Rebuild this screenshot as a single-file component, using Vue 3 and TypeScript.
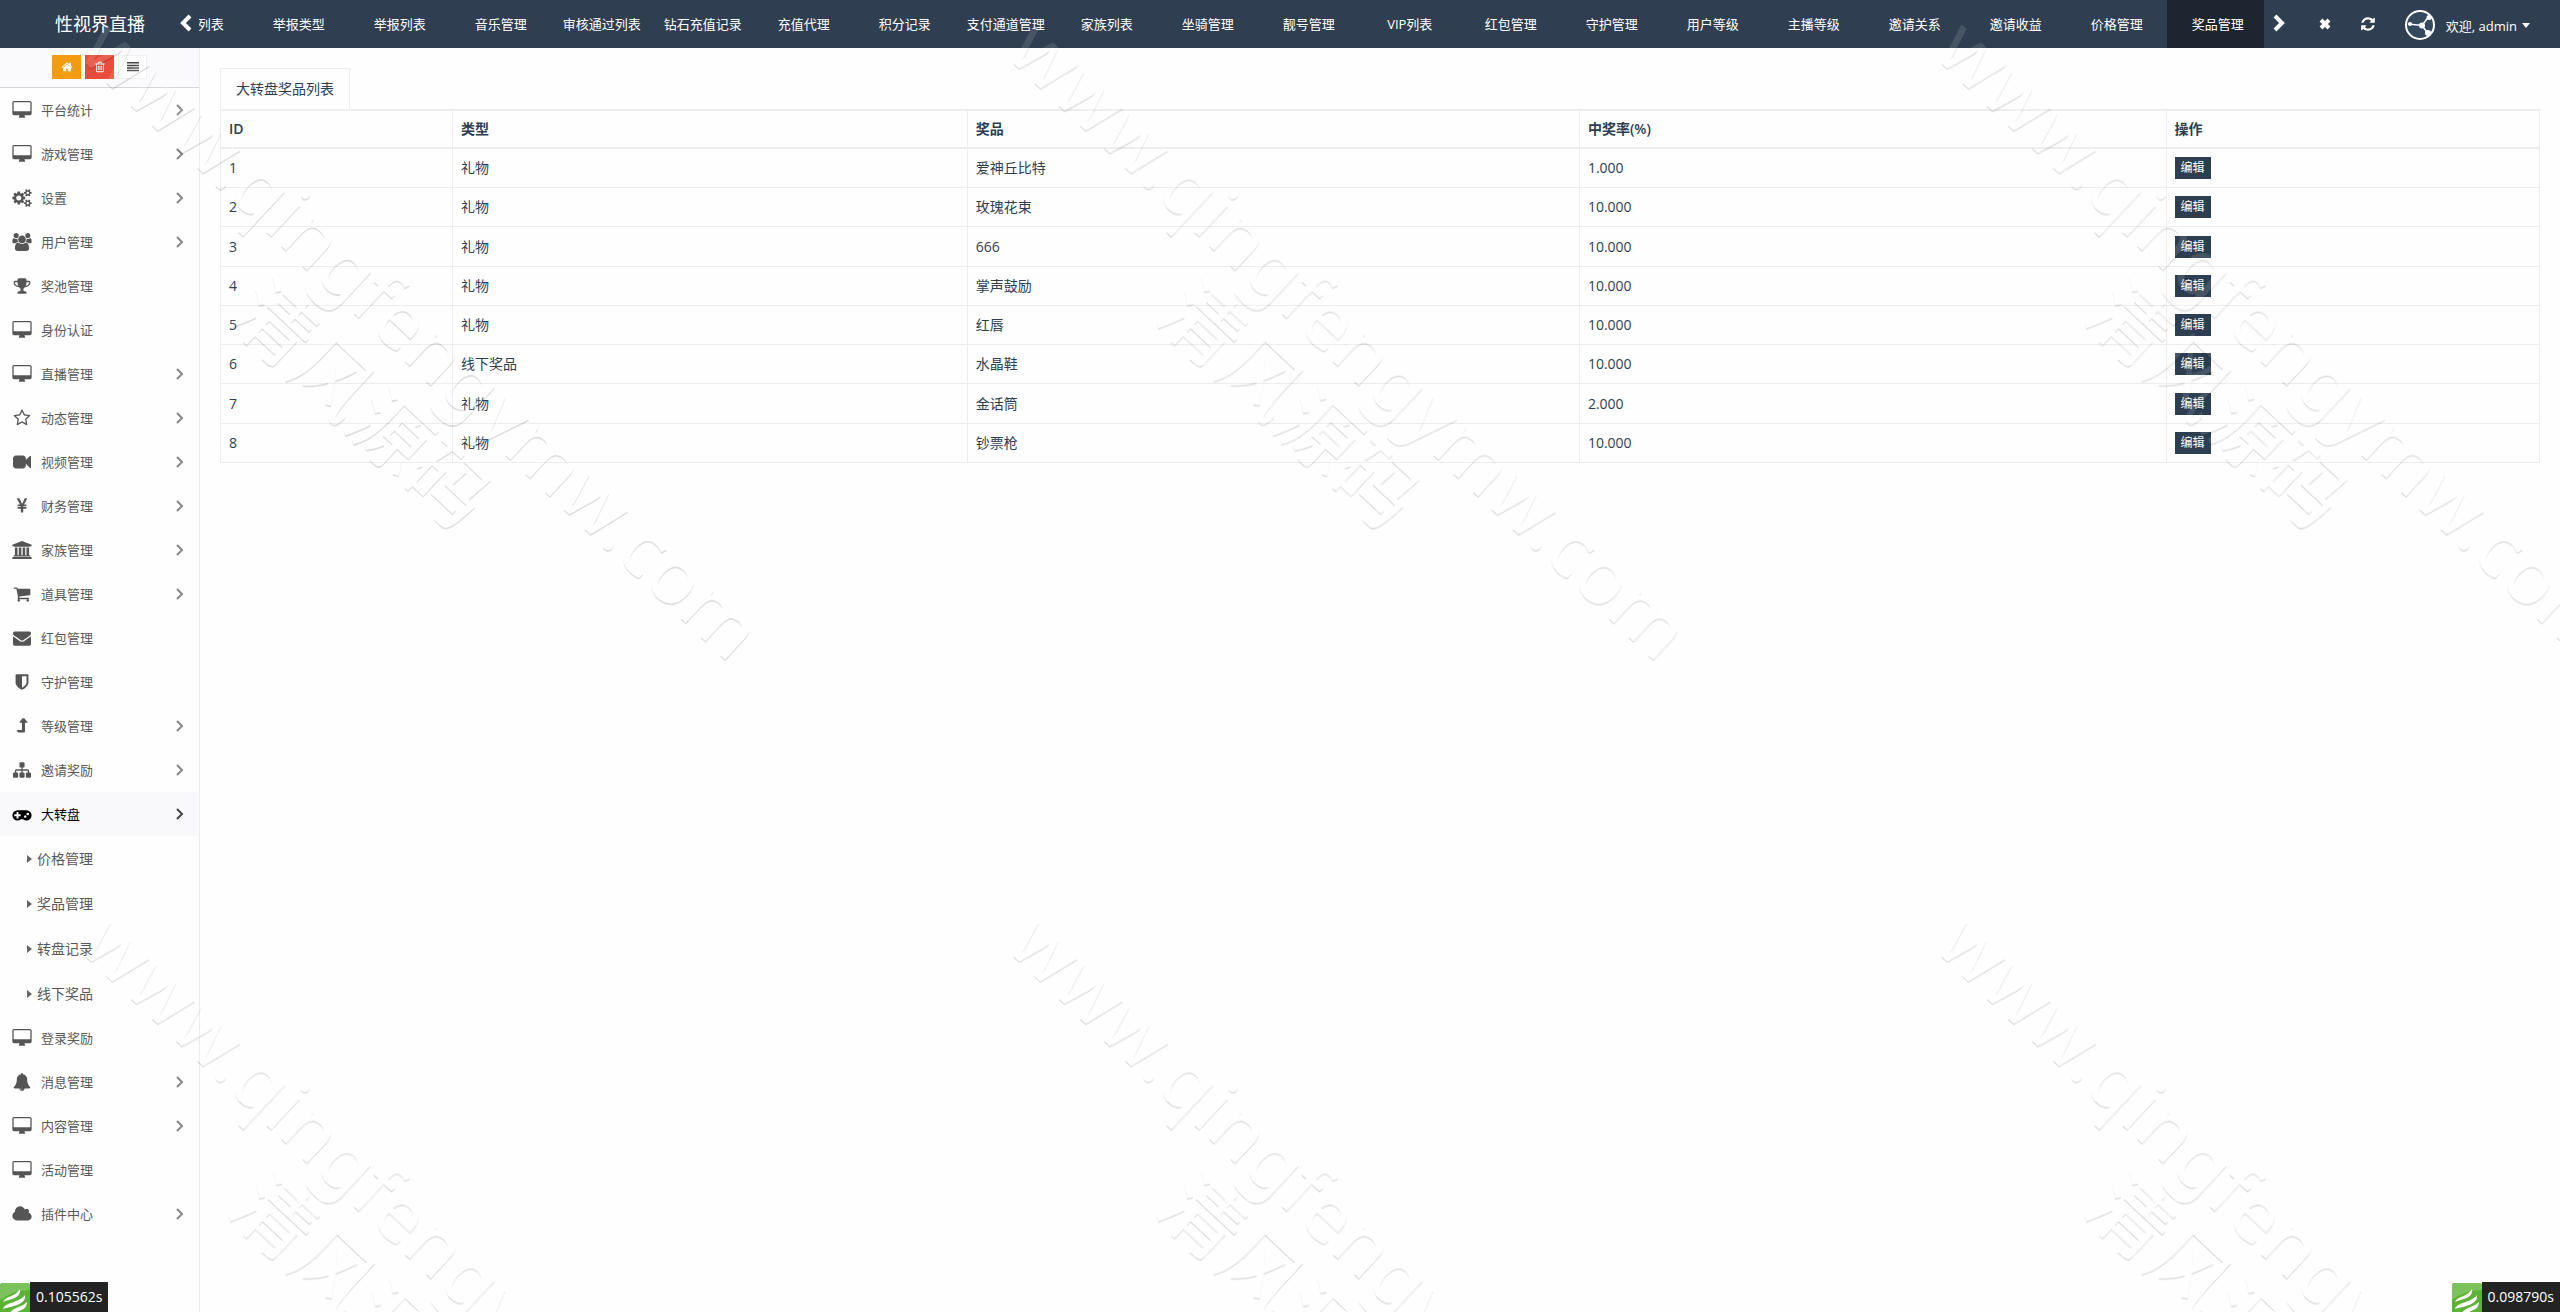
<script setup lang="ts">
import { ref } from 'vue'

interface Icon {
  w: number
  d: string
}
interface MenuItem {
  label: string
  icon: string
  expandable: boolean
  children?: string[]
}
interface Prize {
  id: number
  type: string
  name: string
  rate: string
}

const icons: Record<string, Icon> = {
  desktop: { w: 1920, d: 'M1792 992v-832q0-13-9.500-22.500t-22.500-9.500h-1600q-13 0-22.500 9.500t-9.500 22.500v832q0 13 9.500 22.500t22.500 9.500h1600q13 0 22.500-9.500t9.500-22.500zm128-832v1088q0 66-47 113t-113 47h-544q0 37 16 77.500t32 71 16 43.500q0 26-19 45t-45 19h-512q-26 0-45-19t-19-45q0-14 16-44t32-70 16-78h-544q-66 0-113-47t-47-113v-1088q0-66 47-113t113-47h1600q66 0 113 47t47 113z' },
  cogs: { w: 1920, d: 'M896 896q0-106-75-181t-181-75-181 75-75 181 75 181 181 75 181-75 75-181zm768 512q0-52-38-90t-90-38-90 38-38 90q0 53 37.500 90.500t90.500 37.500 90.500-37.500 37.500-90.500zm0-1024q0-52-38-90t-90-38-90 38-38 90q0 53 37.500 90.500t90.500 37.500 90.500-37.500 37.500-90.500zm-384 421v185q0 10-7 19.500t-16 10.500l-155 24q-11 35-32 76 34 48 90 115 7 11 7 20 0 12-7 19-23 30-82.500 89.500t-78.500 59.500q-11 0-21-7l-115-90q-37 19-77 31-11 108-23 155-7 24-30 24h-186q-11 0-20-7.500t-10-17.500l-23-153q-34-10-75-31l-118 89q-7 7-20 7-11 0-21-8-144-133-144-160 0-9 7-19 10-14 41-53t47-61q-23-44-35-82l-152-24q-10-1-17-9.500t-7-19.500v-185q0-10 7-19.500t16-10.500l155-24q11-35 32-76-34-48-90-115-7-11-7-20 0-12 7-20 22-30 82-89t79-59q11 0 21 7l115 90q34-18 77-32 11-108 23-154 7-24 30-24h186q11 0 20 7.500t10 17.500l23 153q34 10 75 31l118-89q8-7 20-7 11 0 21 8 144 133 144 160 0 8-7 19-12 16-42 54t-45 60q23 48 34 82l152 23q10 2 17 10.500t7 19.500zm640 533v140q0 16-149 31-12 27-30 52 51 113 51 138 0 4-4 7-122 71-124 71-8 0-46-47t-52-68q-20 2-30 2t-30-2q-14 21-52 68t-46 47q-2 0-124-71-4-3-4-7 0-25 51-138-18-25-30-52-149-15-149-31v-140q0-16 149-31 13-29 30-52-51-113-51-138 0-4 4-7 4-2 35-20t59-34 30-16q8 0 46 46.500t52 67.500q20-2 30-2t30 2q51-71 92-112l6-2q4 0 124 70 4 3 4 7 0 25-51 138 17 23 30 52 149 15 149 31zm0-1024v140q0 16-149 31-12 27-30 52 51 113 51 138 0 4-4 7-122 71-124 71-8 0-46-47t-52-68q-20 2-30 2t-30-2q-14 21-52 68t-46 47q-2 0-124-71-4-3-4-7 0-25 51-138-18-25-30-52-149-15-149-31v-140q0-16 149-31 13-29 30-52-51-113-51-138 0-4 4-7 4-2 35-20t59-34 30-16q8 0 46 46.500t52 67.500q20-2 30-2t30 2q51-71 92-112l6-2q4 0 124 70 4 3 4 7 0 25-51 138 17 23 30 52 149 15 149 31z' },
  users: { w: 1920, d: 'M593 896q-162 5-265 128h-134q-82 0-138-40.500t-56-118.500q0-353 124-353 6 0 43.500 21t97.500 42.500 119 21.500q67 0 133-23-5 37-5 66 0 159 81 256zm1071 637q0 120-73 189.500t-194 69.500h-874q-121 0-194-69.500t-73-189.500q0-53 3.500-103.500t14-109 26.500-108.500 43-97.500 62-81 85.500-53.500 111.500-20q10 0 43 21.500t73 48 107 48 135 21.500 135-21.500 107-48 73-48 43-21.500q61 0 111.500 20t85.500 53.500 62 81 43 97.500 26.500 108.500 14 109 3.500 103.500zm-1024-1277q0 106-75 181t-181 75-181-75-75-181 75-181 181-75 181 75 75 181zm704 384q0 159-112.500 271.500t-271.500 112.500-271.500-112.500-112.500-271.500 112.500-271.500 271.500-112.500 271.500 112.500 112.500 271.500zm576 225q0 78-56 118.500t-138 40.500h-134q-103-123-265-128 81-97 81-256 0-29-5-66 66 23 133 23 59 0 119-21.500t97.500-42.500 43.500-21q124 0 124 353zm-128-609q0 106-75 181t-181 75-181-75-75-181 75-181 181-75 181 75 75 181z' },
  trophy: { w: 1792, d: 'M522 883q-74-162-74-371h-256v96q0 78 94.500 162t235.500 113zm1078-275v-96h-256q0 209-74 371 141-29 235.500-113t94.500-162zm128-128v128q0 71-41.500 143t-112 130-173 97.500-215.500 44.500q-42 54-95 95-38 34-52.500 72.500t-14.500 89.500q0 54 30.500 91t97.500 37q75 0 133.500 45.500t58.500 114.500v64q0 14-9 23t-23 9h-832q-14 0-23-9t-9-23v-64q0-69 58.500-114.500t133.500-45.500q67 0 97.500-37t30.500-91q0-51-14.500-89.500t-52.500-72.500q-53-41-95-95-113-5-215.500-44.500t-173-97.500-112-130-41.500-143v-128q0-40 28-68t68-28h288v-96q0-66 47-113t113-47h576q66 0 113 47t47 113v96h288q40 0 68 28t28 68z' },
  star: { w: 1792, d: 'M1201 1004l306-297-422-62-189-382-189 382-422 62 306 297-73 421 378-199 377 199zm527-357q0 22-26 48l-363 354 86 500q1 7 1 20 0 50-41 50-19 0-40-12l-449-236-449 236q-22 12-40 12-21 0-31.500-14.500t-10.500-35.500q0-6 2-20l86-500-364-354q-25-27-25-48 0-37 56-46l502-73 225-455q19-41 49-41t49 41l225 455 502 73q56 9 56 46z' },
  video: { w: 1792, d: 'M1792 352v1088q0 42-39 59-13 5-25 5-27 0-45-19l-403-403v166q0 119-84.500 203.500t-203.500 84.500h-704q-119 0-203.500-84.500t-84.500-203.500v-704q0-119 84.500-203.500t203.500-84.500h704q119 0 203.500 84.500t84.500 203.500v165l403-402q18-19 45-19 12 0 25 5 39 17 39 59z' },
  yen: { w: 1792, d: 'M985 1536h-172q-13 0-22-9t-10-23v-330h-288q-13 0-22-9t-10-23v-103q0-13 10-22t22-10h288v-85h-288q-13 0-22-9t-10-23v-104q0-13 10-22t22-10h214l-321-578q-8-16 0-32 10-16 28-16h194q19 0 29 18l215 425q19 38 56 125 10-24 30-68t28-61l191-420q8-19 29-19h191q17 0 27 16 9 14 1 31l-313 579h215q13 0 22 10t10 22v104q0 14-10 23t-22 9h-290v85h290q13 0 22 10t10 22v103q0 14-10 23t-22 9h-290v330q0 13-10 22t-22 10z' },
  bank: { w: 1920, d: 'M960 0l960 384v128h-128q0 26-20.500 45t-48.500 19h-1526q-28 0-48.500-19t-20.500-45h-128v-128zm-704 640h256v768h128v-768h256v768h128v-768h256v768h128v-768h256v768h59q28 0 48.500 19t20.500 45v64h-1664v-64q0-26 20.500-45t48.500-19h59v-768zm1595 960q28 0 48.500 19t20.500 45v128h-1920v-128q0-26 20.500-45t48.500-19h1782z' },
  cart: { w: 1792, d: 'M704 1536q0 52-38 90t-90 38-90-38-38-90 38-90 90-38 90 38 38 90zm896 0q0 52-38 90t-90 38-90-38-38-90 38-90 90-38 90 38 38 90zm128-1088v512q0 24-16.500 42.500t-40.500 21.500l-1044 122q13 60 13 70 0 16-24 64h920q26 0 45 19t19 45-19 45-45 19h-1024q-26 0-45-19t-19-45q0-11 8-31.500t16-36 21.500-40 15.500-29.500l-177-823h-204q-26 0-45-19t-19-45 19-45 45-19h256q16 0 28.500 6.500t19.500 15.500 13 24.500 8 26 5.500 29.500 4.500 26h1201q26 0 45 19t19 45z' },
  envelope: { w: 1792, d: 'M1792 710v794q0 66-47 113t-113 47h-1472q-66 0-113-47t-47-113v-794q44 49 101 87 362 246 497 345 57 42 92.500 65.500t94.500 48 110 24.500h2q51 0 110-24.500t94.500-48 92.500-65.500q170-123 498-345 57-39 100-87zm0-294q0 79-49 151t-122 123q-376 261-468 325-10 7-42.500 30.500t-54 38-52 32.500-57.500 27-50 9h-2q-23 0-50-9t-57.500-27-52-32.500-54-38-42.500-30.500q-91-64-262-182.500t-205-142.500q-62-42-117-115.500t-55-136.500q0-78 41.500-130t118.500-52h1472q65 0 112.500 47t47.500 113z' },
  shield: { w: 1792, d: 'M1344 960v-640h-448v1137q119-63 213-137 235-184 235-360zm192-768v768q0 86-33.500 170.500t-83 150-118 127.500-126.500 103-121 77.500-89.500 49.500-42.500 20q-12 6-26 6t-26-6q-16-7-42.500-20t-89.500-49.500-121-77.500-126.500-103-118-127.500-83-150-33.500-170.500v-768q0-26 19-45t45-19h1152q26 0 45 19t19 45z' },
  levelUp: { w: 1792, d: 'M1152 160l280 350q17 20 6 43t-38 22h-206v865q0 96-96 96h-560q-16 0-24-12l-150-180q-12-14-4-34 10-18 28-18h500v-717h-206q-27 0-38-22t6-43l280-350q42-42 111-42t111 42z' },
  sitemap: { w: 1792, d: 'M1792 1248v320q0 40-28 68t-68 28h-320q-40 0-68-28t-28-68v-320q0-40 28-68t68-28h96v-192h-512v192h96q40 0 68 28t28 68v320q0 40-28 68t-68 28h-320q-40 0-68-28t-28-68v-320q0-40 28-68t68-28h96v-192h-512v192h96q40 0 68 28t28 68v320q0 40-28 68t-68 28h-320q-40 0-68-28t-28-68v-320q0-40 28-68t68-28h96v-192q0-52 38-90t90-38h512v-192h-96q-40 0-68-28t-28-68v-320q0-40 28-68t68-28h320q40 0 68 28t28 68v320q0 40-28 68t-68 28h-96v192h512q52 0 90 38t38 90v192h96q40 0 68 28t28 68z' },
  gamepad: { w: 1920, d: 'M832 1088v-128q0-14-9-23t-23-9h-192v-192q0-14-9-23t-23-9h-128q-14 0-23 9t-9 23v192h-192q-14 0-23 9t-9 23v128q0 14 9 23t23 9h192v192q0 14 9 23t23 9h128q14 0 23-9t9-23v-192h192q14 0 23-9t9-23zm576 64q0-53-37.500-90.500t-90.500-37.500-90.500 37.500-37.500 90.500 37.500 90.500 90.500 37.500 90.500-37.500 37.500-90.500zm256-256q0-53-37.500-90.500t-90.500-37.500-90.500 37.500-37.500 90.500 37.500 90.500 90.500 37.500 90.500-37.500 37.500-90.500zm256 128q0 212-150 362t-362 150q-192 0-338-128h-220q-146 128-338 128-212 0-362-150t-150-362 150-362 362-150h896q212 0 362 150t150 362z' },
  bell: { w: 1792, d: 'M912 1696q0-16-16-16-59 0-101.500-42.500t-42.500-101.500q0-16-16-16t-16 16q0 73 51.500 124.500t124.500 51.500q16 0 16-16zm816-288q0 52-38 90t-90 38h-448q0 106-75 181t-181 75-181-75-75-181h-448q-52 0-90-38t-38-90q50-42 91-88t85-119.500 74.500-158.500 50-206 19.500-260q0-152 117-282.500t307-158.500q-8-19-8-39 0-40 28-68t68-28 68 28 28 68q0 20-8 39 190 28 307 158.500t117 282.500q0 139 19.500 260t50 206 74.500 158.500 85 119.500 91 88z' },
  cloud: { w: 1920, d: 'M1920 1152q0 159-112.500 271.500t-271.500 112.500h-1088q-185 0-316.500-131.500t-131.500-316.500q0-132 71-241.500t187-163.500q-2-28-2-43 0-212 150-362t362-150q158 0 286.500 88t187.500 230q70-62 166-62 106 0 181 75t75 181q0 75-41 138 129 30 213 134.500t84 239.500z' },
  home: { w: 1792, d: 'M1472 992v480q0 26-19 45t-45 19h-384v-384h-256v384h-384q-26 0-45-19t-19-45v-480l576-480 575 474q1 2 1 6zm223-69l-62 74q-8 9-21 11h-3q-13 0-21-7l-692-577-692 577q-12 8-24 7-13-2-21-11l-62-74q-8-10-7-23.500t11-21.500l719-599q32-26 76-26t76 26l244 204v-195q0-14 9-23t23-9h192q14 0 23 9t9 23v408l219 182q10 8 11 21.500t-7 23.500z' },
  trash: { w: 1792, d: 'M704 736v576q0 14-9 23t-23 9h-64q-14 0-23-9t-9-23v-576q0-14 9-23t23-9h64q14 0 23 9t9 23zm256 0v576q0 14-9 23t-23 9h-64q-14 0-23-9t-9-23v-576q0-14 9-23t23-9h64q14 0 23 9t9 23zm256 0v576q0 14-9 23t-23 9h-64q-14 0-23-9t-9-23v-576q0-14 9-23t23-9h64q14 0 23 9t9 23zm128 724v-948h-896v948q0 22 7 40.500t14.500 27 10.500 8.500h832q3 0 10.500-8.500t14.500-27 7-40.500zm-672-1076h448l-48-117q-7-9-17-11h-317q-10 2-17 11zm928 32v64q0 14-9 23t-23 9h-96v948q0 83-47 143.500t-113 60.500h-832q-66 0-113-58.500t-47-141.500v-952h-96q-14 0-23-9t-9-23v-64q0-14 9-23t23-9h309l70-167q15-37 54-63t79-26h320q40 0 79 26t54 63l70 167h309q14 0 23 9t9 23z' },
  list: { w: 1792, d: 'M0 160h1792v224h-1792zM0 544h1792v224h-1792zM0 928h1792v224h-1792zM0 1312h1792v224h-1792z' },
  refresh: { w: 1792, d: 'M1639 1056q0 5-1 7-64 268-268 434.500t-478 166.500q-146 0-282.500-55t-243.500-157l-129 129q-19 19-45 19t-45-19-19-45v-448q0-26 19-45t45-19h448q26 0 45 19t19 45-19 45l-137 137q71 66 161 102t187 36q134 0 250-65t186-179q11-17 53-117 8-23 30-23h192q13 0 22.500 9.500t9.500 22.500zm25-800v448q0 26-19 45t-45 19h-448q-26 0-45-19t-19-45 19-45l138-138q-148-137-349-137-134 0-250 65t-186 179q-11 17-53 117-8 23-30 23h-199q-13 0-22.500-9.500t-9.500-22.500v-7q65-268 270-434.500t480-166.500q146 0 284 55.500t245 156.500l130-129q19-19 45-19t45 19 19 45z' },
}

const tabs = [
  '列表', '举报类型', '举报列表', '音乐管理', '审核通过列表', '钻石充值记录', '充值代理',
  '积分记录', '支付通道管理', '家族列表', '坐骑管理', '靓号管理', 'VIP列表', '红包管理',
  '守护管理', '用户等级', '主播等级', '邀请关系', '邀请收益', '价格管理', '奖品管理',
]
const activeTab = ref(tabs.length - 1)

const menu: MenuItem[] = [
  { label: '平台统计', icon: 'desktop', expandable: true },
  { label: '游戏管理', icon: 'desktop', expandable: true },
  { label: '设置', icon: 'cogs', expandable: true },
  { label: '用户管理', icon: 'users', expandable: true },
  { label: '奖池管理', icon: 'trophy', expandable: false },
  { label: '身份认证', icon: 'desktop', expandable: false },
  { label: '直播管理', icon: 'desktop', expandable: true },
  { label: '动态管理', icon: 'star', expandable: true },
  { label: '视频管理', icon: 'video', expandable: true },
  { label: '财务管理', icon: 'yen', expandable: true },
  { label: '家族管理', icon: 'bank', expandable: true },
  { label: '道具管理', icon: 'cart', expandable: true },
  { label: '红包管理', icon: 'envelope', expandable: false },
  { label: '守护管理', icon: 'shield', expandable: false },
  { label: '等级管理', icon: 'levelUp', expandable: true },
  { label: '邀请奖励', icon: 'sitemap', expandable: true },
  { label: '大转盘', icon: 'gamepad', expandable: true, children: ['价格管理', '奖品管理', '转盘记录', '线下奖品'] },
  { label: '登录奖励', icon: 'desktop', expandable: false },
  { label: '消息管理', icon: 'bell', expandable: true },
  { label: '内容管理', icon: 'desktop', expandable: true },
  { label: '活动管理', icon: 'desktop', expandable: false },
  { label: '插件中心', icon: 'cloud', expandable: true },
]
const openMenu = ref('大转盘')

const prizes: Prize[] = [
  { id: 1, type: '礼物', name: '爱神丘比特', rate: '1.000' },
  { id: 2, type: '礼物', name: '玫瑰花束', rate: '10.000' },
  { id: 3, type: '礼物', name: '666', rate: '10.000' },
  { id: 4, type: '礼物', name: '掌声鼓励', rate: '10.000' },
  { id: 5, type: '礼物', name: '红唇', rate: '10.000' },
  { id: 6, type: '线下奖品', name: '水晶鞋', rate: '10.000' },
  { id: 7, type: '礼物', name: '金话筒', rate: '2.000' },
  { id: 8, type: '礼物', name: '钞票枪', rate: '10.000' },
]

const traces = [
  { side: 'left', time: '0.105562s' },
  { side: 'right', time: '0.098790s' },
]

// Watermark tiles repeat on a fixed grid over the whole window.
const marks = [0, 1].flatMap((row) =>
  [0, 1, 2].map((col) => `translate(${403 + col * 928} ${359 + row * 893}) rotate(43)`),
)
</script>

<template>
  <div class="page">
    <header class="navbar">
      <a class="brand" href="#">性视界直播</a>
      <button class="scroll prev" type="button" aria-label="上一页">
        <svg width="12" height="18" viewBox="0 0 12 18"><path d="M10 2L3 9l7 7" /></svg>
      </button>
      <nav class="tabs">
        <a
          v-for="(tab, i) in tabs"
          :key="i"
          href="#"
          class="tab"
          :class="{ active: i === activeTab }"
          @click.prevent="activeTab = i"
        >{{ tab }}</a>
      </nav>
      <button class="scroll next" type="button" aria-label="下一页">
        <svg width="12" height="18" viewBox="0 0 12 18"><path d="M2 2l7 7-7 7" /></svg>
      </button>
      <button class="tool" type="button" aria-label="关闭">
        <svg width="12" height="12" viewBox="0 0 12 12"><path class="cross" d="M2 2l8 8M10 2l-8 8" /></svg>
      </button>
      <button class="tool" type="button" aria-label="刷新">
        <svg width="16" height="16" viewBox="0 0 1792 1792"><path :d="icons.refresh.d" fill="#fff" /></svg>
      </button>
      <a class="user" href="#">
        <svg class="avatar" width="30" height="30" viewBox="0 0 30 30">
          <circle cx="15" cy="15" r="14" fill="#34495e" stroke="#fff" stroke-width="2" />
          <path d="M3 14l14 1.500 6-8M17 15.500l6 8" fill="none" stroke="#fff" stroke-width="1.500" />
          <circle cx="5" cy="14" r="2" fill="#fff" />
          <circle cx="17" cy="15.500" r="3" fill="#fff" />
          <circle cx="24" cy="7.500" r="2.500" fill="#fff" />
          <circle cx="23" cy="23" r="3" fill="#fff" />
        </svg>
        <span class="hello">欢迎, admin</span>
        <svg class="caret" width="8" height="5" viewBox="0 0 8 5"><path d="M0 0h8l-4 5z" fill="#fff" /></svg>
      </a>
    </header>

    <div class="body">
      <aside class="sidebar">
        <div class="shortcuts">
          <button class="short orange" type="button" aria-label="首页">
            <svg width="12" height="12" viewBox="0 0 1792 1792"><path :d="icons.home.d" /></svg>
          </button>
          <button class="short red" type="button" aria-label="清除缓存">
            <svg width="12" height="12" viewBox="0 0 1792 1792"><path :d="icons.trash.d" /></svg>
          </button>
          <button class="short plain" type="button" aria-label="菜单">
            <svg width="12" height="12" viewBox="0 0 1792 1792"><path :d="icons.list.d" /></svg>
          </button>
        </div>
        <ul class="menu">
          <li v-for="item in menu" :key="item.label">
            <a
              href="#"
              class="item"
              :class="{ open: item.label === openMenu }"
              @click.prevent="openMenu = item.label"
            >
              <svg class="icon" width="20" height="18" :viewBox="`0 0 ${icons[item.icon].w} 1792`">
                <path :d="icons[item.icon].d" />
              </svg>
              <span class="label">{{ item.label }}</span>
              <svg v-if="item.expandable" class="angle" width="8" height="12" viewBox="0 0 8 12">
                <path d="M1 1l5 5-5 5" />
              </svg>
            </a>
            <ul v-if="item.children && item.label === openMenu" class="submenu">
              <li v-for="child in item.children" :key="child">
                <a href="#" class="subitem">
                  <svg width="5" height="8" viewBox="0 0 5 8"><path d="M0 0l5 4-5 4z" /></svg>
                  <span>{{ child }}</span>
                </a>
              </li>
            </ul>
          </li>
        </ul>
      </aside>

      <main class="content">
        <div class="pane-tabs">
          <a class="pane-tab" href="#">大转盘奖品列表</a>
        </div>
        <table class="grid">
          <colgroup>
            <col class="c-id" />
            <col class="c-type" />
            <col class="c-name" />
            <col class="c-rate" />
            <col class="c-act" />
          </colgroup>
          <thead>
            <tr>
              <th>ID</th>
              <th>类型</th>
              <th>奖品</th>
              <th>中奖率(%)</th>
              <th>操作</th>
            </tr>
          </thead>
          <tbody>
            <tr v-for="p in prizes" :key="p.id">
              <td>{{ p.id }}</td>
              <td>{{ p.type }}</td>
              <td>{{ p.name }}</td>
              <td>{{ p.rate }}</td>
              <td><button class="edit" type="button">编辑</button></td>
            </tr>
          </tbody>
        </table>
      </main>
    </div>

    <div v-for="t in traces" :key="t.side" class="trace" :class="t.side">
      <svg width="30" height="30" viewBox="0 0 30 30">
        <rect y="1" width="30" height="36" rx="3" fill="#5cb234" />
        <path d="M0 4q0-3 3-3h24q3 0 3 3v4q-16 0-30 10z" fill="#7cc25c" />
        <path d="M3 20c2-6 13-5 17-13 1 8-6 9-11 11-3 1-5 1-6 2zM3 27c2-7 16-6 22-14 1 8-8 10-14 12-4 1-6 1-8 2zM10 31c3-6 11-5 17-11 0 7-6 8-10 10-3 1-5 1-7 1z" fill="#fff" />
      </svg>
      <span>{{ t.time }}</span>
    </div>

    <svg class="watermark" width="100%" height="100%" aria-hidden="true">
      <defs>
        <filter id="emboss" filterUnits="userSpaceOnUse" x="0" y="0" width="100%" height="100%">
          <feOffset in="SourceAlpha" dx="0" dy="2" result="low" />
          <feComposite in="low" in2="SourceAlpha" operator="out" result="edge" />
          <feFlood flood-color="#000" flood-opacity="0.12" />
          <feComposite in2="edge" operator="in" result="shade" />
          <feFlood flood-color="#fff" flood-opacity="0.12" />
          <feComposite in2="SourceAlpha" operator="in" result="face" />
          <feMerge>
            <feMergeNode in="shade" />
            <feMergeNode in="face" />
          </feMerge>
        </filter>
      </defs>
      <g filter="url(#emboss)">
        <g v-for="m in marks" :key="m" :transform="m">
          <text y="0">www.qingfengymw.com</text>
          <text y="90">清风源码</text>
        </g>
      </g>
    </svg>
  </div>
</template>

<style>
body {
  margin: 0;
  background: #fefefe;
}
</style>

<style scoped>
.page {
  font-family: "Open Sans", "Noto Sans CJK SC", sans-serif;
  font-size: 14px;
  line-height: 20px;
  color: #2c3e50;
}
.page *,
.page {
  box-sizing: border-box;
}
a {
  color: inherit;
  text-decoration: none;
}
button {
  margin: 0;
  padding: 0;
  border: 0;
  background: none;
  font-family: inherit;
  cursor: pointer;
}
svg {
  display: block;
  flex: none;
}
ul {
  list-style: none;
  margin: 0;
  padding: 0;
}

.navbar {
  display: flex;
  align-items: stretch;
  height: 48px;
  padding-right: 30px;
  background: #2f3e50;
  color: #fff;
  font-size: 13px;
}
.brand {
  display: flex;
  align-items: center;
  justify-content: flex-end;
  width: 145px;
  font-size: 18px;
}
.scroll,
.tool {
  display: flex;
  align-items: center;
  justify-content: center;
}
.scroll path {
  fill: none;
  stroke: #fff;
  stroke-width: 4;
}
.prev {
  width: 54px;
  padding-left: 27px;
}
.next {
  width: 30px;
}
.next,
.prev {
  padding-bottom: 2px;
}
.tool {
  width: 43px;
}
.next + .tool {
  margin-left: 10px;
}
.cross {
  fill: none;
  stroke: #fff;
  stroke-width: 4;
}
.tabs {
  display: flex;
  justify-content: flex-end;
  gap: 4px;
  flex: 1;
  min-width: 0;
  overflow: hidden;
}
.tab {
  display: flex;
  align-items: center;
  justify-content: center;
  flex: 0 0 97px;
  padding-left: 5px;
  white-space: nowrap;
}
.tab:first-child {
  flex: 1 1 0;
  justify-content: flex-end;
  padding: 0 20px 0 0;
}
.tab.active {
  background: #1c2530;
}
.user {
  display: flex;
  align-items: center;
  margin-left: 15px;
  padding-top: 2px;
}
.hello {
  margin: 2px 5px 0 11px;
  white-space: nowrap;
}

.body {
  display: flex;
  min-height: calc(100vh - 48px);
}
.sidebar {
  flex: 0 0 200px;
  border-right: 1px solid #ececf0;
  color: #585858;
}
.shortcuts {
  display: flex;
  align-items: center;
  justify-content: center;
  gap: 4px;
  height: 40px;
  padding-bottom: 2px;
  border-bottom: 1px solid #d5d5d8;
  background: #faf9fc;
}
.short {
  display: flex;
  align-items: center;
  justify-content: center;
  width: 29px;
  height: 24px;
  fill: #fff;
}
.orange {
  background: #f39c12;
}
.red {
  background: #e74c3c;
}
.plain {
  border: 1px solid #f0f0f3;
  background: #fff;
  fill: #444;
}
.item {
  display: flex;
  align-items: center;
  height: 44px;
  padding: 0 15px 0 12px;
  font-size: 13px;
}
.icon {
  fill: #555;
}
.label {
  flex: 1;
  padding-left: 9px;
}
.angle path {
  fill: none;
  stroke: #888;
  stroke-width: 2;
}
.item.open {
  background: #f9f8fb;
  color: #000;
}
.item.open .icon {
  fill: #000;
}
.item.open .angle path {
  stroke: #444;
}
.subitem {
  display: flex;
  align-items: center;
  gap: 5px;
  height: 45px;
  padding-left: 27px;
  font-size: 14px;
}
.subitem path {
  fill: #666;
}

.content {
  flex: 1;
  min-width: 0;
  padding: 20px;
}
.pane-tabs {
  display: flex;
  border-bottom: 2px solid #ecedef;
}
.pane-tab {
  height: 42px;
  margin-bottom: -1px;
  padding: 10px 15px;
  border: 1px solid #ecedef;
  border-bottom-color: #f4f4f6;
  background: #fefefe;
}
.grid {
  width: 100%;
  table-layout: fixed;
  border-collapse: separate;
  border-spacing: 0;
  border-left: 1px solid #ecedef;
}
.c-id {
  width: 10%;
}
.c-type {
  width: 22.2%;
}
.c-name {
  width: 26.4%;
}
.c-rate {
  width: 25.3%;
}
.grid th,
.grid td {
  padding: 0 8px;
  border-right: 1px solid #ecedef;
  border-bottom: 1px solid #ecedef;
  text-align: left;
  vertical-align: middle;
}
.grid th {
  height: 38px;
  border-bottom-width: 2px;
  font-weight: 600;
}
.grid td {
  height: 39px;
}
.grid tr:nth-child(4n + 3) td {
  height: 40px;
}
.edit {
  display: block;
  width: 36px;
  height: 22px;
  background: #2c3e50;
  color: #fff;
  font-size: 12px;
  line-height: 22px;
}

.trace {
  position: fixed;
  bottom: 0;
  display: flex;
  height: 30px;
  color: #fff;
}
.trace.left {
  left: 0;
}
.trace.right {
  right: 0;
}
.trace span {
  padding: 0 6px;
  background: #232323;
  line-height: 30px;
}

.watermark {
  position: fixed;
  inset: 0;
  pointer-events: none;
}
.watermark text {
  font-family: "Noto Sans", "Noto Sans CJK SC", sans-serif;
  font-size: 79px;
  text-anchor: middle;
}
</style>
